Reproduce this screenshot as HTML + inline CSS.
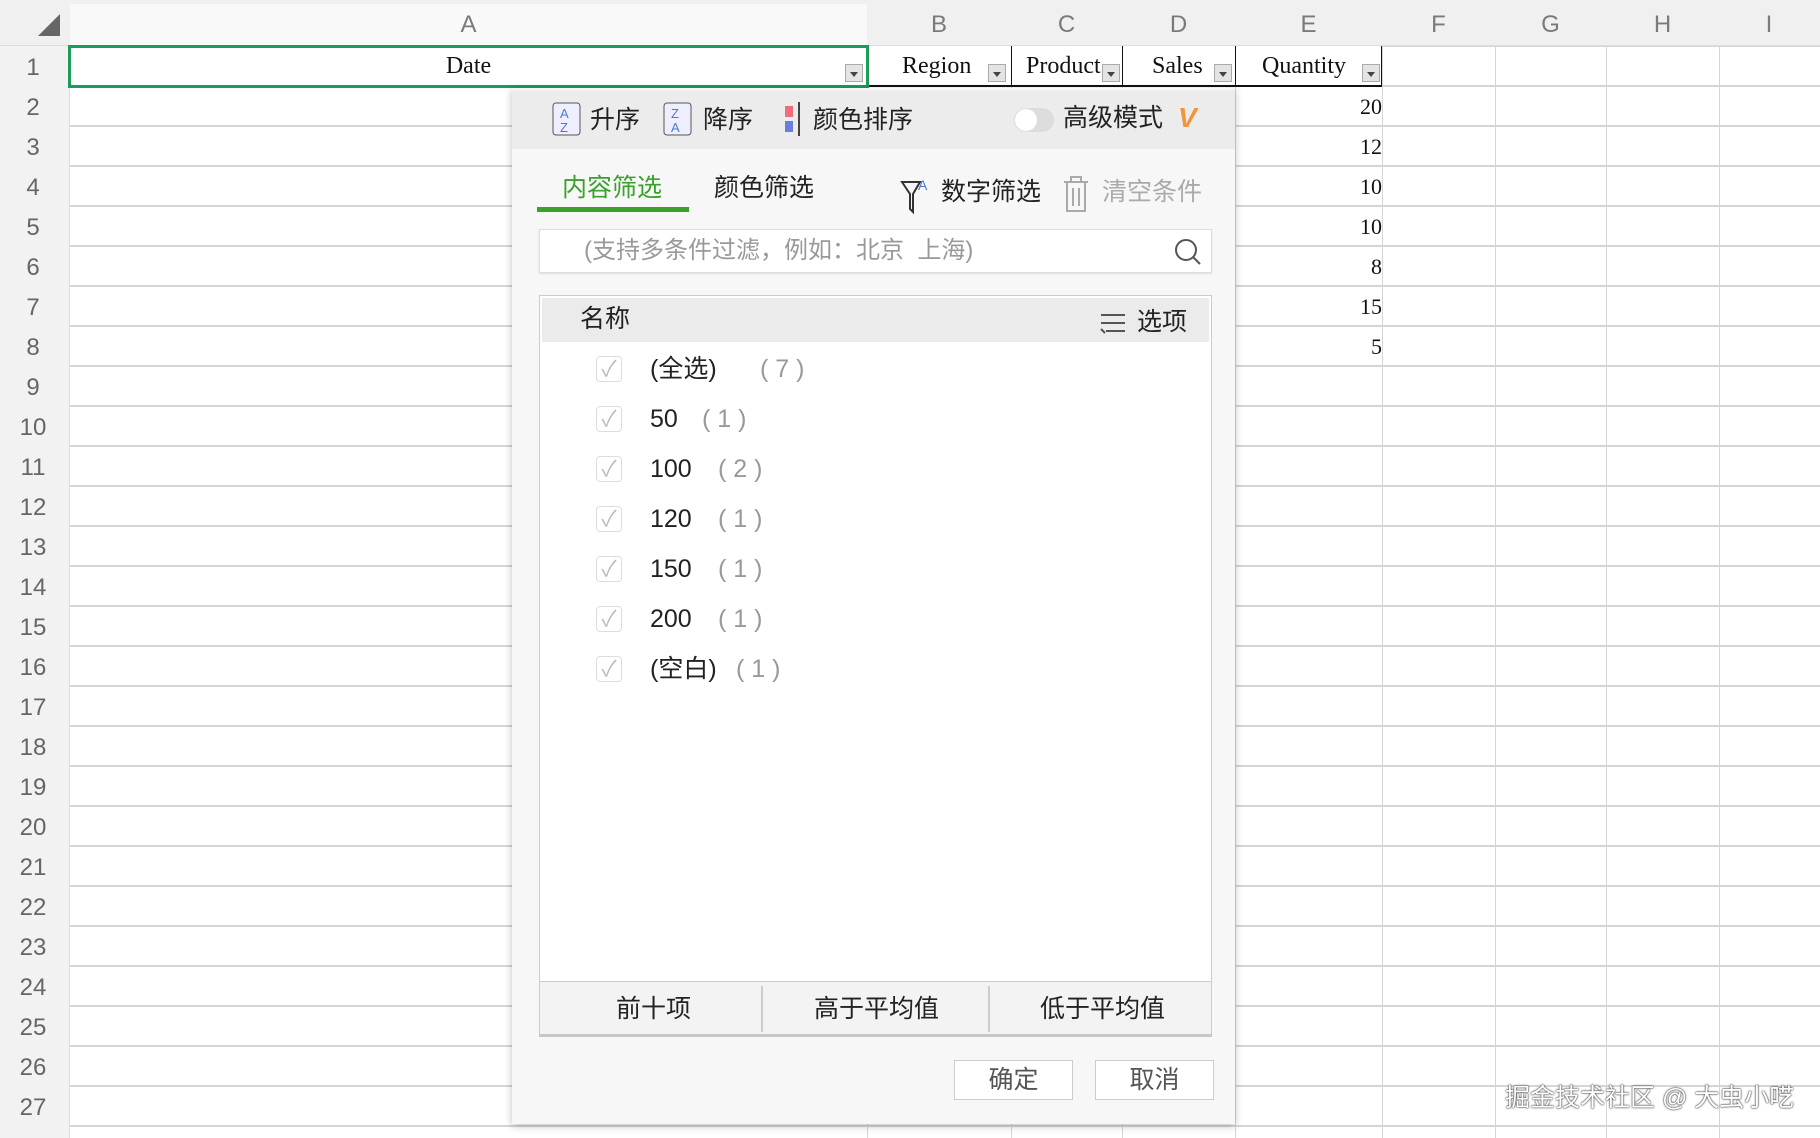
<!DOCTYPE html>
<html><head><meta charset="utf-8"><style>
*{margin:0;padding:0;box-sizing:border-box}
body{width:1820px;height:1138px;overflow:hidden;background:#fff;position:relative;font-family:"Liberation Sans","Noto Sans CJK SC",sans-serif}
.grid{position:absolute;left:70px;top:46px;width:1750px;height:1092px;
background-image:linear-gradient(#d6d6d6 2px,transparent 2px);background-size:100% 40px;background-position:0 39px}
.v{position:absolute;top:0;height:1138px;width:1px;background:#d6d6d6}
.colh{position:absolute;top:0;left:0;width:1820px;height:46px;background:#f0f0f0;border-bottom:1px solid #ddd}
.ch{position:absolute;top:11px;font-size:24px;color:#7a7a7a;text-align:center}
.rowh{position:absolute;left:0;top:46px;width:70px;height:1092px;background:#f2f2f2;border-right:1px solid #ddd}
.rn{position:absolute;left:0;width:66px;text-align:center;font-size:24px;color:#666;height:40px;line-height:44px}
.cell{position:absolute;font-family:"Liberation Serif",serif;font-size:24px;color:#111}
.dd{position:absolute;width:18px;height:18px;background:#e4e4e4;border:1px solid #aaa;top:64px}
.dd:after{content:"";position:absolute;left:4px;top:7px;border-left:4px solid transparent;border-right:4px solid transparent;border-top:5px solid #444}
.num{position:absolute;right:438px;font-family:"Liberation Serif",serif;font-size:22px;color:#111}
.pop{position:absolute;left:512px;top:88px;width:723px;height:1036px;background:#f7f7f7;box-shadow:0 2px 8px rgba(0,0,0,.25);font-size:25px;color:#222}
.pop span{position:absolute;white-space:nowrap;line-height:36px}
.tb{position:absolute;left:0;top:2px;width:723px;height:59px;background:#ececec}
.cb{position:absolute;left:84px;width:26px;height:26px;border:1px solid #ddd;border-radius:4px;background:#fff;color:#bbb;font-size:22px;line-height:24px;text-align:center}
.cnt{color:#999}
.btn{position:absolute;top:972px;width:119px;height:40px;background:#fff;border:1px solid #ccc;text-align:center;line-height:38px;color:#555;font-size:25px}
</style></head><body>
<div class="grid"></div>
<div class="v" style="left:867px"></div><div class="v" style="left:1011px"></div><div class="v" style="left:1122px"></div><div class="v" style="left:1235px"></div><div class="v" style="left:1382px"></div><div class="v" style="left:1495px"></div><div class="v" style="left:1606px"></div><div class="v" style="left:1719px"></div>
<div class="colh">
<div style="position:absolute;left:38px;top:14px;border-left:22px solid transparent;border-bottom:22px solid #666"></div>
<div style="position:absolute;left:70px;top:4px;width:797px;height:42px;background:#f9f9f9"></div>
<div class="ch" style="left:70px;width:797px">A</div><div class="ch" style="left:867px;width:144px">B</div><div class="ch" style="left:1011px;width:111px">C</div><div class="ch" style="left:1122px;width:113px">D</div><div class="ch" style="left:1235px;width:147px">E</div><div class="ch" style="left:1382px;width:113px">F</div><div class="ch" style="left:1495px;width:111px">G</div><div class="ch" style="left:1606px;width:113px">H</div><div class="ch" style="left:1719px;width:100px">I</div>
</div>
<div class="rowh">
<div class="rn" style="top:0">1</div><div class="rn" style="top:40px">2</div><div class="rn" style="top:80px">3</div><div class="rn" style="top:120px">4</div><div class="rn" style="top:160px">5</div><div class="rn" style="top:200px">6</div><div class="rn" style="top:240px">7</div><div class="rn" style="top:280px">8</div><div class="rn" style="top:320px">9</div><div class="rn" style="top:360px">10</div><div class="rn" style="top:400px">11</div><div class="rn" style="top:440px">12</div><div class="rn" style="top:480px">13</div><div class="rn" style="top:520px">14</div><div class="rn" style="top:560px">15</div><div class="rn" style="top:600px">16</div><div class="rn" style="top:640px">17</div><div class="rn" style="top:680px">18</div><div class="rn" style="top:720px">19</div><div class="rn" style="top:760px">20</div><div class="rn" style="top:800px">21</div><div class="rn" style="top:840px">22</div><div class="rn" style="top:880px">23</div><div class="rn" style="top:920px">24</div><div class="rn" style="top:960px">25</div><div class="rn" style="top:1000px">26</div><div class="rn" style="top:1040px">27</div>
</div>
<div style="position:absolute;left:867px;top:46px;width:515px;height:41px;border-bottom:2px solid #111;background:#fff"></div>
<div style="position:absolute;left:1011px;top:46px;width:1px;height:41px;background:#111"></div><div style="position:absolute;left:1122px;top:46px;width:1px;height:41px;background:#111"></div><div style="position:absolute;left:1235px;top:46px;width:1px;height:41px;background:#111"></div><div style="position:absolute;left:1381px;top:46px;width:1px;height:41px;background:#111"></div>
<div style="position:absolute;left:68px;top:45px;width:801px;height:43px;border:3px solid #1a9c5a;background:#fff"></div>
<div class="cell" style="left:70px;width:797px;text-align:center;top:53px">Date</div>
<div class="cell" style="left:902px;top:53px">Region</div>
<div class="cell" style="left:1026px;top:53px;width:76px;overflow:hidden;white-space:nowrap">Product</div>
<div class="cell" style="left:1152px;top:53px">Sales</div>
<div class="cell" style="left:1262px;top:53px">Quantity</div>
<div class="dd" style="left:845px"></div><div class="dd" style="left:988px"></div><div class="dd" style="left:1102px"></div><div class="dd" style="left:1214px"></div><div class="dd" style="left:1362px"></div>
<div class="num" style="top:94px">20</div><div class="num" style="top:134px">12</div><div class="num" style="top:174px">10</div><div class="num" style="top:214px">10</div><div class="num" style="top:254px">8</div><div class="num" style="top:294px">15</div><div class="num" style="top:334px">5</div>
<div class="pop">
<div class="tb"></div>
<svg style="position:absolute;left:40px;top:14px" width="30" height="34"><rect x="1" y="1" width="27" height="32" rx="3" fill="#eef" stroke="#555"/><text x="8" y="16" font-size="13" fill="#4a7bd0">A</text><text x="8" y="30" font-size="13" fill="#4a7bd0">Z</text></svg>
<span style="left:78px;top:14px">升序</span>
<svg style="position:absolute;left:151px;top:14px" width="30" height="34"><rect x="1" y="1" width="27" height="32" rx="3" fill="#eef" stroke="#555"/><text x="8" y="16" font-size="13" fill="#4a7bd0">Z</text><text x="8" y="30" font-size="13" fill="#4a7bd0">A</text></svg>
<span style="left:191px;top:14px">降序</span>
<div style="position:absolute;left:273px;top:18px;width:8px;height:11px;background:#f06d7a"></div><div style="position:absolute;left:273px;top:33px;width:8px;height:11px;background:#6b7ee0"></div><div style="position:absolute;left:286px;top:14px;width:2px;height:34px;background:#444"></div>
<span style="left:301px;top:14px">颜色排序</span>
<div style="position:absolute;left:502px;top:20px;width:40px;height:24px;border-radius:12px;background:#ddd"><div style="position:absolute;left:1px;top:1px;width:22px;height:22px;border-radius:11px;background:#fff"></div></div>
<span style="left:551px;top:12px">高级模式</span>
<span style="left:666px;top:12px;color:#f0953a;font-weight:bold;font-style:italic;font-size:28px">V</span>
<span style="left:50px;top:82px;color:#3aa12c">内容筛选</span>
<div style="position:absolute;left:25px;top:119px;width:152px;height:5px;background:#3aa12c"></div>
<span style="left:202px;top:82px">颜色筛选</span>
<svg style="position:absolute;left:388px;top:88px" width="32" height="40"><path d="M2 6 L20 6 L13 18 L13 36 L10 33 L10 18 Z" fill="none" stroke="#333" stroke-width="2"/><text x="18" y="14" font-size="14" fill="#4a7bd0">A</text></svg>
<span style="left:429px;top:86px">数字筛选</span>
<svg style="position:absolute;left:550px;top:86px" width="28" height="40"><path d="M2 8 H26 M9 8 V3 H19 V8 M5 8 V37 H23 V8 M11 14 V32 M17 14 V32" fill="none" stroke="#aaa" stroke-width="2"/></svg>
<span style="left:590px;top:86px;color:#aaa">清空条件</span>
<div style="position:absolute;left:27px;top:141px;width:673px;height:44px;background:#fff;border:1px solid #ddd;box-shadow:0 1px 2px rgba(0,0,0,.1)"></div>
<span style="left:72px;top:145px;color:#999;font-size:24px">(支持多条件过滤，例如：北京&nbsp; 上海)</span>
<svg style="position:absolute;left:662px;top:150px" width="28" height="28"><circle cx="12" cy="12" r="10" fill="none" stroke="#555" stroke-width="2"/><path d="M19 19 L26 26" stroke="#555" stroke-width="2"/></svg>
<div style="position:absolute;left:27px;top:207px;width:673px;height:687px;background:#fff;border:1px solid #ccc"></div>
<div style="position:absolute;left:30px;top:210px;width:667px;height:44px;background:#ebebeb"></div>
<span style="left:68px;top:213px">名称</span>
<svg style="position:absolute;left:588px;top:225px" width="26" height="22"><path d="M1 2 H25 M1 10 H25 M6 18 H25" stroke="#555" stroke-width="2"/><path d="M1 16 L5 20" stroke="#555" stroke-width="2"/></svg>
<span style="left:625px;top:216px">选项</span>
<div class="cb" style="top:268px">✓</div><span style="left:138px;top:263px">(全选)</span><span class="cnt" style="left:248px;top:263px">( 7 )</span>
<div class="cb" style="top:318px">✓</div><span style="left:138px;top:313px">50</span><span class="cnt" style="left:190px;top:313px">( 1 )</span>
<div class="cb" style="top:368px">✓</div><span style="left:138px;top:363px">100</span><span class="cnt" style="left:206px;top:363px">( 2 )</span>
<div class="cb" style="top:418px">✓</div><span style="left:138px;top:413px">120</span><span class="cnt" style="left:206px;top:413px">( 1 )</span>
<div class="cb" style="top:468px">✓</div><span style="left:138px;top:463px">150</span><span class="cnt" style="left:206px;top:463px">( 1 )</span>
<div class="cb" style="top:518px">✓</div><span style="left:138px;top:513px">200</span><span class="cnt" style="left:206px;top:513px">( 1 )</span>
<div class="cb" style="top:568px">✓</div><span style="left:138px;top:563px">(空白)</span><span class="cnt" style="left:224px;top:563px">( 1 )</span>
<div style="position:absolute;left:27px;top:893px;width:673px;height:56px;background:#f3f3f3;border:1px solid #ccc;border-bottom:3px solid #c8c8c8"></div>
<div style="position:absolute;left:249px;top:898px;width:2px;height:46px;background:#ccc"></div><div style="position:absolute;left:476px;top:898px;width:2px;height:46px;background:#ccc"></div>
<span style="left:104px;top:903px">前十项</span><span style="left:302px;top:903px">高于平均值</span><span style="left:528px;top:903px">低于平均值</span>
<div class="btn" style="left:442px">确定</div><div class="btn" style="left:583px">取消</div>
</div>
<div style="position:absolute;left:1505px;top:1078px;font-size:25px;color:#fff;text-shadow:0 0 2px #333,0 0 1px #000;white-space:nowrap">掘金技术社区 @ 大虫小呓</div>
</body></html>
